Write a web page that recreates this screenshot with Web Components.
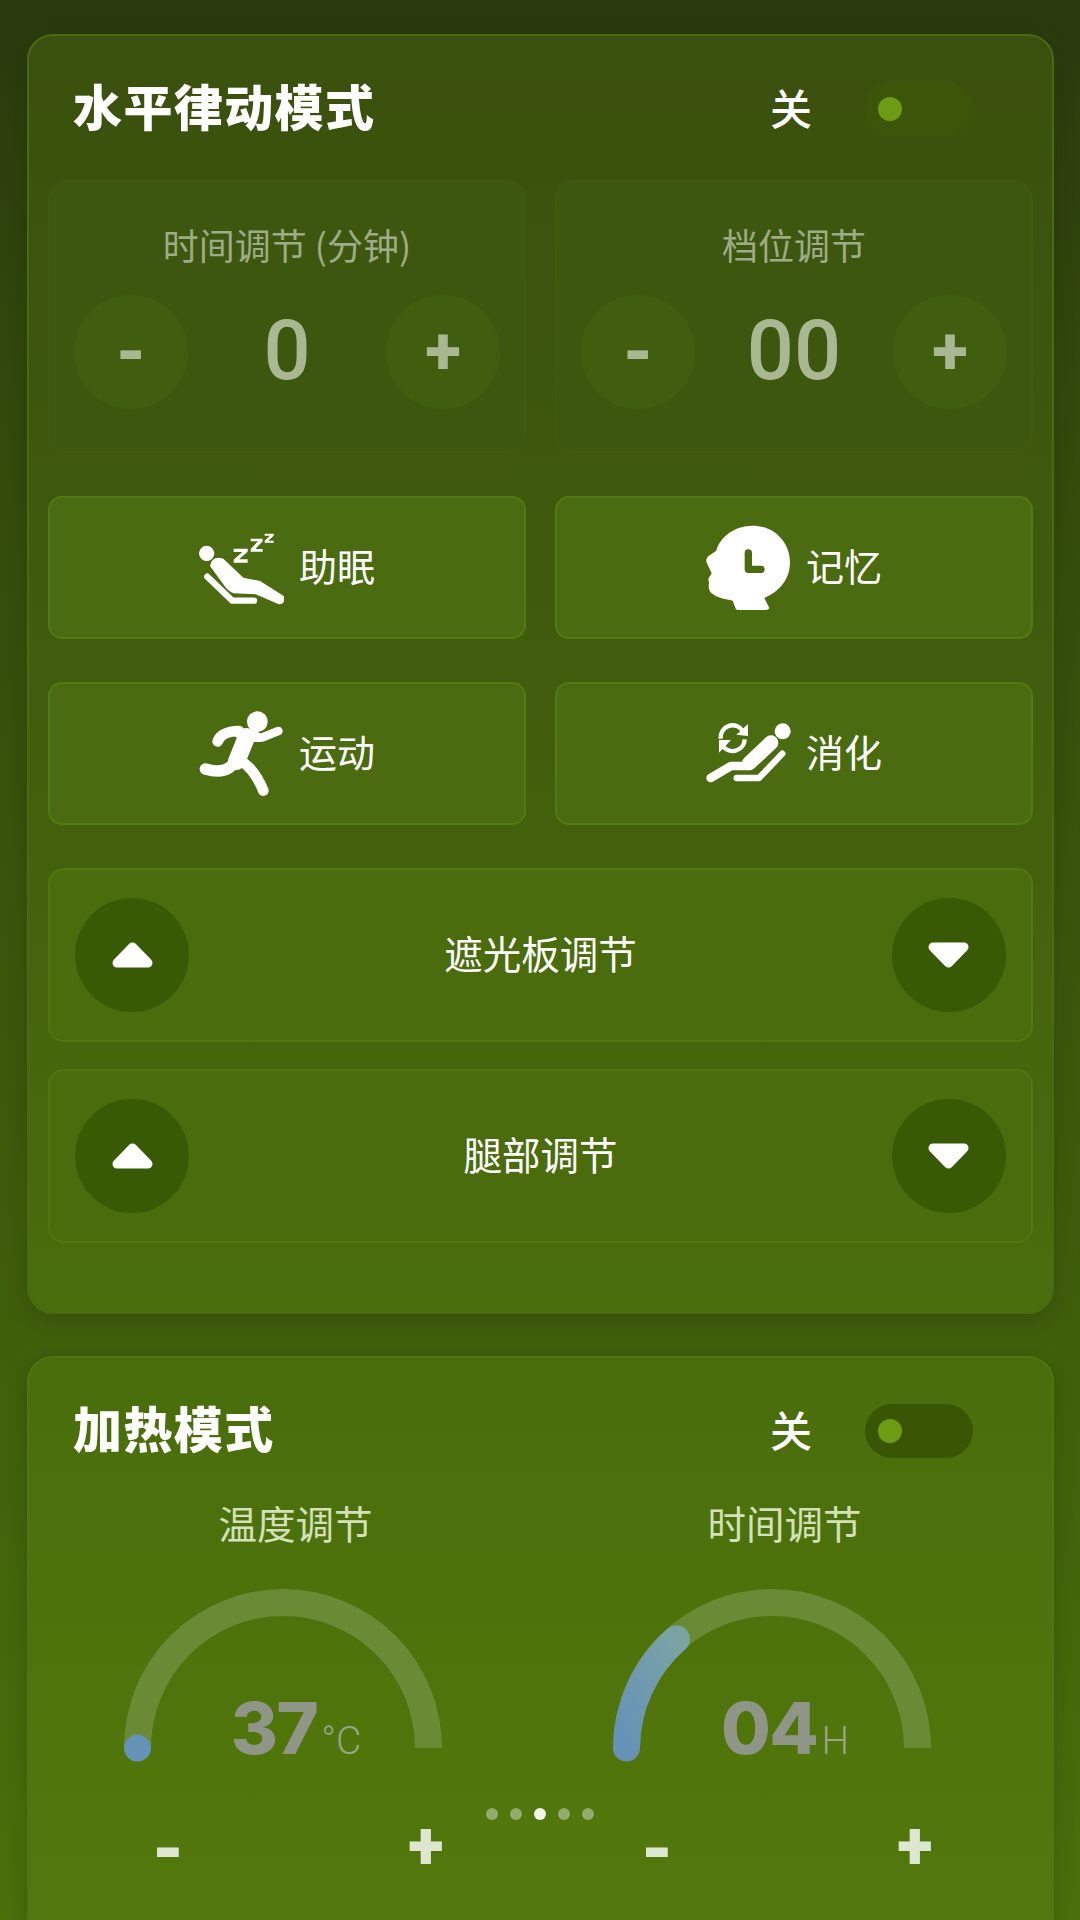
<!DOCTYPE html>
<html lang="zh">
<head>
<meta charset="utf-8">
<style>
html,body{margin:0;padding:0}
body{width:1080px;height:1920px;overflow:hidden;position:relative;background:linear-gradient(180deg,#293a0d 0,#33490c 400px,#3f5e0b 1300px,#4a6f0b 1920px);font-family:"Noto Sans CJK SC","Noto Sans",sans-serif;color:#fff}
</style>
</head>
<body>
<x-page>
  <x-card heading="水平律动模式" dim style="--h:1280px;--bg:linear-gradient(180deg,#3a500d 0,#3f590d 40%,#4a6d0c 100%);--bd:#4a6a12">
    <x-grid style="--rows:273px">
      <x-stepper label="时间调节 (分钟)" value="0"></x-stepper>
      <x-stepper label="档位调节" value="00"></x-stepper>
    </x-grid>
    <x-grid style="--rows:143px;margin-top:43px">
      <x-mode label="助眠"><svg viewBox="85 73 255 255" width="85" height="85" fill="#fff" stroke="none"><circle cx="108" cy="158" r="23"/><path d="M118 196Q124 164 158 174L218 231 268 241 338 285Q348 298 334 309 325 313 314 306L255 281 188 278Q170 270 160 254Z"/><path d="M110 228 185 300H250" fill="none" stroke="#fff" stroke-width="19" stroke-linecap="round" stroke-linejoin="round"/><path d="M189 144H231V153L205 176H231V186H189V177L215 154H189Z"/><path d="M240 114H276V122L254 145H276V153H240V145L262 122H240Z"/><path d="M282 99H309V105L293 120H309V126H282V120L298 105H282Z"/></svg></x-mode>
      <x-mode label="记忆"><svg viewBox="75 73 255 255" width="85" height="85" fill="#fff"><path d="M215 75C280 75 327 125 327 185 327 235 297 272 250 292L265 322Q262 328 250 328H172Q164 328 162 318L155 300C135 296 108 292 92 278 82 268 82 256 84 248L82 234 92 218 77 186Q72 172 88 162L106 150C116 110 160 75 215 75Z"/><path d="M202 157V206H240" fill="none" stroke="#4a6b10" stroke-width="22" stroke-linecap="round" stroke-linejoin="round"/></svg></x-mode>
      <x-mode label="运动"><svg viewBox="85 631 255 255" width="85" height="85" fill="none" stroke="#fff" stroke-linecap="round" stroke-linejoin="round"><circle cx="260" cy="663" r="31" fill="#fff" stroke="none"/><path d="M141 722Q152 692 205 691" stroke-width="32"/><path d="M205 697 255 708" stroke-width="32"/><path d="M240 702Q262 716 280 708L323 691" stroke-width="26"/><path d="M228 708 198 782" stroke-width="52"/><path d="M197 775Q172 826 104 805" stroke-width="34"/><path d="M207 778Q252 805 278 870" stroke-width="32"/></svg></x-mode>
      <x-mode label="消化"><svg viewBox="75 637 255 255" width="85" height="85" fill="#fff"><circle cx="305" cy="698" r="24"/><g fill="none" stroke="#fff" stroke-linecap="round" stroke-linejoin="round"><path d="M89 838 150 802H205" stroke-width="26"/><path d="M205 793 270 732" stroke-width="44"/><path d="M167 838H234L304 765" stroke-width="19"/></g><g fill="none" stroke="#fff" stroke-width="13"><path d="M119 720A36 36 0 0 1 186 698"/><path d="M191 722A36 36 0 0 1 128 745"/></g><path d="M201 676V712L166 708Z"/><path d="M114 724H150L114 762Z"/></svg></x-mode>
    </x-grid>
    <x-row label="遮光板调节" style="margin-top:43px"></x-row>
    <x-row label="腿部调节" style="margin-top:27px"></x-row>
  </x-card>
  <x-card heading="加热模式" style="--h:640px;--bg:linear-gradient(180deg,#4a6d0c 0,#4f750b 60%,#54790e 100%);--bd:#4f7411;margin-top:42px">
    <x-gauges>
      <x-gauge label="温度调节" value="37" unit="°C" progress="0"></x-gauge>
      <x-gauge label="时间调节" value="04" unit="H" progress="1"></x-gauge>
    </x-gauges>
  </x-card>
</x-page>
<x-dots></x-dots>
<script>
const def=(name,css,html)=>{customElements.define(name,class extends HTMLElement{
  constructor(){super();this.attachShadow({mode:'open'})}
  connectedCallback(){const a=n=>this.getAttribute(n)??'';this.shadowRoot.innerHTML=`<style>${css}</style>${html(a,this)}`}
})};
def('x-page',':host{display:block;padding:34px 27px 0}',()=>'<slot></slot>');
def('x-card',`:host{display:block;box-sizing:border-box;height:var(--h);width:1027px;border-radius:26px;background:var(--bg);border:2px solid var(--bd);padding:0 19px;box-shadow:0 6px 20px rgba(20,30,0,.22)}
 header{display:flex;align-items:center;height:144px;padding:0 60px 0 25px;box-sizing:border-box}
 h2{flex:1;margin:0;font:900 49px/1 "Noto Sans CJK SC",sans-serif;color:#fff;letter-spacing:1.4px;position:relative;top:-4px}
 span{font:500 42px/1 "Noto Sans CJK SC",sans-serif;margin-right:53px;position:relative;top:-1px}
 x-toggle{position:relative;top:1px}
 `,(a,e)=>`<header><h2>${a('heading')}</h2><span>关</span><x-toggle ${e.hasAttribute('dim')?'dim':''}></x-toggle></header><slot></slot>`);
def('x-toggle',`:host{display:flex;align-items:center;width:108px;height:54px;border-radius:27px;background:#395604;padding-left:13px;box-sizing:border-box}
 :host([dim]){background:#3c5508}
 i{width:24px;height:24px;border-radius:50%;background:#6d9c14}`,()=>'<i></i>');
def('x-grid',':host{display:grid;grid-template-columns:478px 478px;column-gap:29px;grid-auto-rows:var(--rows);row-gap:43px}',()=>'<slot></slot>');
const numF='"Roboto","Liberation Sans",sans-serif';
def('x-stepper',`:host{display:flex;flex-direction:column;align-items:center;box-sizing:border-box;border:2px solid #41590f;background:#3e570e;border-radius:20px;padding:0 24px}
 p{margin:0;height:113px;padding-top:29px;box-sizing:border-box;font:400 36px/66px "Noto Sans CJK SC",sans-serif;color:#9dab87;white-space:nowrap}
 div{display:flex;align-items:center;justify-content:space-between;width:100%;height:114px}
 b{width:114px;height:114px;border-radius:50%;background:#415e0e;color:#a9b893;display:flex;align-items:center;justify-content:center;font:800 66px/1 ${numF}}
 b.m{font-size:72px;padding-top:2px;box-sizing:border-box}
 em{font:normal 500 83px/1 ${numF};color:#a9b893;position:relative;top:-2px}`,a=>`<p>${a('label')}</p><div><b class="m">-</b><em>${a('value')}</em><b>+</b></div>`);
def('x-mode',`:host{display:flex;align-items:center;justify-content:center;gap:15px;box-sizing:border-box;border:2px solid #527a12;background:#4a6b10;border-radius:14px;font:400 38px/1 "Noto Sans CJK SC",sans-serif;color:#fff}
 ::slotted(svg){flex:none}
 span{position:relative;top:-3px}`,a=>`<slot></slot><span>${a('label')}</span>`);
const tri=d=>`<svg width="43" height="26" viewBox="0 0 43 26"><path d="${d?'M6 5H37L21.5 21Z':'M21.5 5 37 21H6Z'}" fill="#fff" stroke="#fff" stroke-width="9" stroke-linejoin="round"/></svg>`;
def('x-row',`:host{display:flex;align-items:center;justify-content:space-between;box-sizing:border-box;height:174px;border:2px solid #517710;background:#4a6c0d;border-radius:16px;padding:0 25px}
 b{width:114px;height:114px;border-radius:50%;background:#395a05;display:flex;align-items:center;justify-content:center}
 span{font:400 38.5px/1 "Noto Sans CJK SC",sans-serif;color:#fff;position:relative;top:-3px}`,a=>`<b>${tri(0)}</b><span>${a('label')}</span><b>${tri(1)}</b>`);
def('x-gauges',':host{display:grid;grid-template-columns:489px 489px;margin-left:-10px}',()=>'<slot></slot>');
def('x-gauge',`:host{display:flex;flex-direction:column;align-items:center;position:relative}
 p{margin:0;font:400 38.5px/54px "Noto Sans CJK SC",sans-serif;color:#d3e0b8;position:relative;left:13px;top:-7px;white-space:nowrap}
 svg{display:block;margin-top:32px;flex:none}
 .v{position:absolute;left:0;right:0;top:190px;display:flex;justify-content:center;align-items:baseline;padding-left:27px;color:#8f9688}
 .v b{font:800 72px/1 Inter,"Liberation Sans",sans-serif;letter-spacing:-1.5px}
 .v i{font:300 39px/1 Roboto,sans-serif;margin-left:4px;color:#97a488}
 .c{display:flex;justify-content:space-between;align-items:center;width:292px;margin-top:46px;font:900 66px/1 ${numF};color:#dde6cf;position:relative;left:15px}
 .c span:first-child{font-size:74px;position:relative;top:3px}
 `,a=>{const p=a('progress')==='1';return `<p>${a('label')}</p>
 <svg width="320" height="176" viewBox="0 0 320 176"><path d="M14.5 160A145.5 145.5 0 0 1 305.5 160" fill="none" stroke="#6b8a35" stroke-width="27"/>
 <defs><linearGradient id="g" x1="0" y1="1" x2="1" y2="0"><stop offset="0" stop-color="#6692b8"/><stop offset="1" stop-color="#7ba3a4"/></linearGradient></defs>
 ${p?'<path d="M14.5 160A145.5 145.5 0 0 1 64.5 51" fill="none" stroke="url(#g)" stroke-width="27" stroke-linecap="round"/>':'<circle cx="14.5" cy="160" r="13.5" fill="#6692b8"/>'}</svg>
 <div class="v"><b>${a('value')}</b><i>${a('unit')}</i></div>
 <div class="c"><span>-</span><span>+</span></div>`});
def('x-dots',`:host{position:absolute;left:0;right:0;top:1808px;display:flex;justify-content:center;gap:12px}
 i{width:12px;height:12px;border-radius:50%;background:#93ab6c}i.a{background:#f2f5ea}`,()=>'<i></i><i></i><i class="a"></i><i></i><i></i>');
</script>
</body>
</html>
